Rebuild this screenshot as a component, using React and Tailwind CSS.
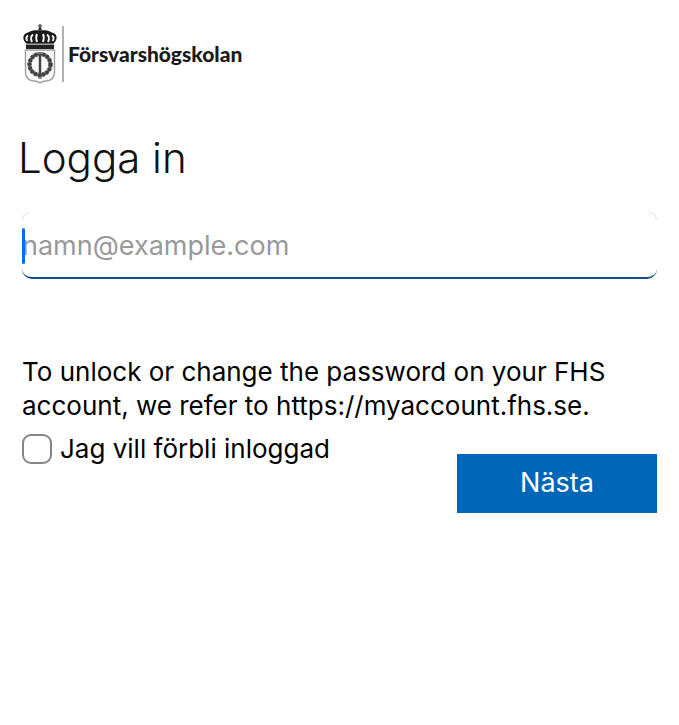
import { useState } from 'react'

function Crest() {
  return (
    <svg width="36" height="60" viewBox="-1 0 36 60" fill="none" aria-hidden="true">
      {/* Crown */}
      <path d="M17 0v5M15 2h4" stroke="#555" strokeWidth="1.5" />
      <circle cx="17" cy="5" r="1.8" fill="#333" />
      <path d="M4 20C-1 16 -1 10 5 8.500C9 6 13 6 17 6.500C21 6 25 6 29 8.500C35 10 35 16 30 20Z" fill="#1a1a1a" />
      <path d="M4.500 17C3 15 3 13 5 11.500M9 18C7.500 15 8 12 10 10.500M14 18C13 15 13 12 14 10M20 18C21 15 21 12 20 10M25 18C26.500 15 26 12 24 10.500M29.500 17C31 15 31 13 29 11.500" stroke="#f4f4f4" strokeWidth="2" />
      <path d="M3 20.500h28v4.500H3z" fill="#222" />
      <path d="M4 20h26" stroke="#aaa" strokeWidth="1" />
      {/* Shield */}
      <path d="M2.500 26v22c0 6 3.500 8.500 8 9c3 .3 5 .5 6.500 2c1.500-1.500 3.500-1.700 6.500-2c4.500-.5 8-3 8-9V26Z" fill="#fafafa" stroke="#a3a3a3" strokeWidth="1.500" />
      <circle cx="17" cy="40.500" r="10.500" stroke="#8a8a8a" strokeWidth="4" />
      <circle cx="17" cy="40.500" r="10.500" stroke="#333" strokeWidth="4" strokeDasharray="2 2" />
      <circle cx="17" cy="40.500" r="10.500" stroke="#444" strokeWidth="1.500" />
      <path d="M17 29v25" stroke="#444" strokeWidth="2.500" />
      <path d="M14 29h6M15 54h4" stroke="#888" strokeWidth="1.500" />
    </svg>
  )
}

function Logo() {
  return (
    <div className="flex items-center">
      <Crest />
      <div className="ml-1 h-14 w-0.5 bg-[#b0b0b0]" />
      <span className="ml-1 font-['Lato'] text-[21px] leading-7 font-black text-[#1a1a1a]">Försvarshögskolan</span>
    </div>
  )
}

function EmailField({ value, onChange }) {
  return (
    <div className="relative mt-7">
      <input
        type="email"
        aria-label="E-post"
        placeholder="namn@example.com"
        value={value}
        onChange={(e) => onChange(e.target.value)}
        className="block h-[67px] w-full rounded-[10px] border-b-2 border-[#0f4f86] bg-transparent pt-0.5 text-[27px] text-black caret-[#0a6cf5] outline-none placeholder:text-[#999]"
      />
      <span className="pointer-events-none absolute top-0 left-0 size-2 rounded-tl-lg border-t border-l border-[#dfe6e6]" />
      <span className="pointer-events-none absolute top-0 right-0 size-2 rounded-tr-lg border-t border-r border-[#e4e4e4]" />
      {!value && <span className="pointer-events-none absolute top-4 left-0 h-9 w-[3px] rounded-full bg-[#0a6cf5]" />}
    </div>
  )
}

export default function App() {
  const [email, setEmail] = useState('')
  const [remember, setRemember] = useState(false)

  return (
    <main className="min-h-screen bg-white px-[22px] pt-6 font-['Inter',sans-serif] text-black">
      <Logo />

      <h1 className="-ml-1 mt-12 text-[42px] leading-[52px] font-light text-[#111]">Logga in</h1>

      <form onSubmit={(e) => e.preventDefault()}>
        <EmailField value={email} onChange={setEmail} />

        <p className="mt-[76px] text-[26px] leading-[34px]">
          To unlock or change the password on your FHS account, we refer to https://myaccount.fhs.se.
        </p>

        <div className="mt-[9px] flex items-start justify-between">
          <label className="flex items-center gap-2 text-[26px] leading-[34px]">
            <input
              type="checkbox"
              checked={remember}
              onChange={(e) => setRemember(e.target.checked)}
              className="size-[30px] appearance-none rounded-[9px] border-2 border-[#858589] bg-white checked:bg-[#0067b8]"
            />
            Jag vill förbli inloggad
          </label>
          <button type="submit" className="mt-[22px] h-[59px] w-[200px] bg-[#0067b8] text-[27px] text-white">
            Nästa
          </button>
        </div>
      </form>
    </main>
  )
}
